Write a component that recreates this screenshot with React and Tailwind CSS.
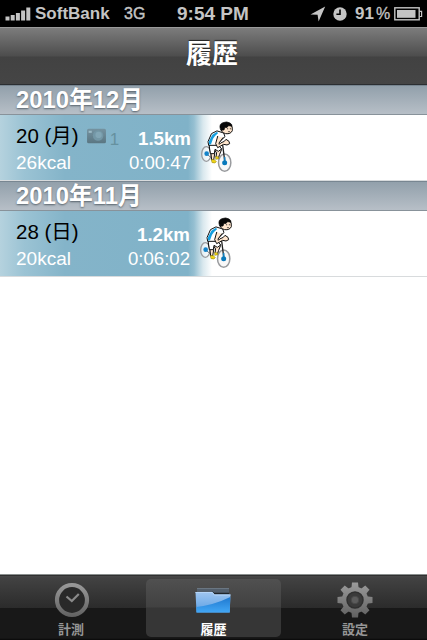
const months = [
  {
    title: "2010年12月",
    rides: [{ day: "20 (月)", photos: 1, distance: "1.5km", calories: "26kcal", time: "0:00:47" }],
  },
  {
    title: "2010年11月",
    rides: [{ day: "28 (日)", photos: 0, distance: "1.2km", calories: "20kcal", time: "0:06:02" }],
  },
];

function StatusBar() {
  return (
    <div className="flex h-[27px] shrink-0 items-center bg-black text-[#c4c4c4]">
      <svg className="ml-[5px]" width="27" height="14" viewBox="0 0 27 14" fill="#c4c4c4">
        <rect x="0.5" y="9.5" width="4" height="4" />
        <rect x="5.7" y="8" width="4" height="5.5" />
        <rect x="10.9" y="6" width="4" height="7.5" />
        <rect x="16.1" y="3.5" width="4" height="10" />
        <rect x="21.3" y="0.5" width="4" height="13" />
      </svg>
      <span className="ml-[3px] w-[76px] text-[17px] leading-[27px] font-bold">SoftBank</span>
      <span className="ml-[13px] w-[53px] text-[16px] leading-[27px] [-webkit-text-stroke:0.4px]">3G</span>
      <span className="w-[72px] text-[19px] leading-[27px] font-bold">9:54 PM</span>
      <svg className="ml-[61px] shrink-0" width="16" height="16" viewBox="0 0 16 16" fill="#c4c4c4">
        <path d="M15.2 0.5 8.6 15.5 7.6 8.7 0.5 8.4Z" />
      </svg>
      <svg className="ml-[7px] shrink-0" width="14" height="14" viewBox="0 0 14 14">
        <circle cx="7" cy="7" r="6.7" fill="#c4c4c4" />
        <path d="M7 2.5V7.3H3.4" fill="none" stroke="#000" strokeWidth="1.6" />
      </svg>
      <span className="ml-[8px] w-[19px] text-[17px] leading-[27px] font-bold">91</span>
      <span className="ml-[2px] w-[14px] text-[16px] leading-[27px] [-webkit-text-stroke:0.3px]">%</span>
      <svg className="ml-[4px] shrink-0" width="29" height="14" viewBox="0 0 29 14" fill="none">
        <rect x="0.8" y="0.8" width="24.4" height="12" stroke="#c4c4c4" strokeWidth="1.4" />
        <rect x="3" y="3" width="18.5" height="7.8" fill="#c4c4c4" />
        <path d="M25.5 4.3H27.6V9.5H25.5" stroke="#c4c4c4" strokeWidth="1.2" />
      </svg>
    </div>
  );
}

function Camera() {
  return (
    <svg className="mt-[12px] ml-[7px] shrink-0" width="21" height="18" viewBox="0 0 20 17">
      <defs>
        <linearGradient id="camera" x1="0" y1="0" x2="0" y2="1">
          <stop offset="0" stopColor="#7593a1" />
          <stop offset="1" stopColor="#5a7682" />
        </linearGradient>
      </defs>
      <path d="M1 3Q1 1.5 2.5 1.5H17.5Q19 1.5 19 3V14Q19 15.5 17.5 15.5H2.5Q1 15.5 1 14Z" fill="url(#camera)" />
      <circle cx="11.5" cy="8" r="5" fill="#7397a6" />
      <circle cx="12" cy="7.5" r="3" fill="#82a6b5" />
      <rect x="2.5" y="3.5" width="3" height="2" fill="#9cbac6" />
    </svg>
  );
}

function Cyclist() {
  return (
    <svg className="mt-[5px] shrink-0" width="35" height="56" viewBox="30 30 105 168" strokeLinecap="round" strokeLinejoin="round">
      <ellipse cx="49" cy="132" rx="14" ry="22" fill="#fff" fillOpacity="0.35" stroke="#999b9e" strokeWidth="4" />
      <ellipse cx="104" cy="158" rx="18.5" ry="26" fill="#f8f8f8" stroke="#999b9e" strokeWidth="4.5" />
      <path d="M48 131 68 146M82 116 92 128" fill="none" stroke="#777b80" strokeWidth="3" />
      <path d="M98 105 104 152" stroke="#222" strokeWidth="4" />
      <path d="M75 109 95 118 89 133 85 144 78 142 80 127 70 119Z" fill="#ffe5cc" stroke="#111" strokeWidth="3" />
      <path d="M59 112 76 112 74 132 71 150 65 150 63 132Z" fill="#ffe5cc" stroke="#111" strokeWidth="3" />
      <path d="M58 101 82 101 95 117 85 124 75 118 73 131 62 131Z" fill="#fff" stroke="#111" strokeWidth="3" />
      <path d="M82 63 101 69 105 80 91 93 79 106 56 106 54 95 64 72Z" fill="#fff" stroke="#111" strokeWidth="3" />
      <path d="M81 65 67 74 56 95 58 104 63 103 69 86 75 78 84 70Z" fill="#159fdf" />
      <path d="M83 79 77 101 83 113 92 108 101 103 111 105 119 101 117 94 108 88 103 94 92 99 88 103 87 99 99 83" fill="#ffe5cc" stroke="#111" strokeWidth="3" />
      <path d="M93 60Q96 70 107 71Q122 73 127 62Q129 50 121 42L98 46Z" fill="#ffe5cc" stroke="#111" strokeWidth="3" />
      <path d="M90 53Q88 41 99 38Q110 33 120 39Q127 43 126 49L116 47 110 53 105 52 102 60 94 61Z" fill="#080808" stroke="#080808" strokeWidth="2" />
      <path d="M113 55V57M121 55V57M115 65H119" stroke="#222" strokeWidth="2.2" />
      <circle cx="50" cy="131" r="7" fill="#1483c9" />
      <path d="M104 143V151" stroke="#1681be" strokeWidth="5" />
      <circle cx="104" cy="158" r="7.5" fill="#0879bb" />
      <path d="M65 149H73L79 155Q76 161 67 158Z" fill="#f3d713" stroke="#a08e14" strokeWidth="2" />
      <path d="M77 139 86 141 87 146 78 148Z" fill="#f3d713" stroke="#7f7214" strokeWidth="1.5" />
    </svg>
  );
}

function RideRow({ ride }) {
  // rows with photos sit a pixel further right
  return (
    <div className="flex h-[66px] border-b border-[#d8dbdd] bg-[linear-gradient(90deg,#b5d2de_0px,#9bc3d4_24px,#84b4c9_65px,#80b2c8_188px,#95bfd1_194px,#d9e8ee_203px,#fff_212px)]">
      <div className={`flex shrink-0 flex-col pl-4 ${ride.photos > 0 ? "w-[191px]" : "w-[190px]"}`}>
        <div className="flex h-[40px]">
          <span className="pt-[8px] text-[20.5px] leading-[26px] whitespace-nowrap text-black">{ride.day}</span>
          {ride.photos > 0 && (
            <>
              <Camera />
              <span className="mt-[14px] ml-[3px] text-[17px] leading-[22px] text-[#66919f]">{ride.photos}</span>
            </>
          )}
          <span className="mt-[13px] ml-auto text-[18.7px] leading-[22px] font-bold text-white">{ride.distance}</span>
        </div>
        <div className="-mt-[3px] flex justify-between text-[18.6px] leading-[22px] text-white">
          <span className="text-[19px]">{ride.calories}</span>
          <span>{ride.time}</span>
        </div>
      </div>
      <div className="ml-[9px] flex">
        <Cyclist />
      </div>
    </div>
  );
}

function ClockIcon() {
  return (
    <svg width="36" height="36" viewBox="0 0 36 36">
      <defs>
        <linearGradient id="metal" x1="0" y1="0" x2="0" y2="36" gradientUnits="userSpaceOnUse">
          <stop offset="0" stopColor="#9c9c9c" />
          <stop offset="1" stopColor="#606060" />
        </linearGradient>
      </defs>
      <circle cx="18" cy="18" r="15" fill="#292929" stroke="url(#metal)" strokeWidth="4.2" />
      <path d="m12.5 14.5 5.3 4.5 7-7" fill="none" stroke="#8a8a8a" strokeWidth="2.2" />
    </svg>
  );
}

function FolderIcon() {
  return (
    <svg className="mr-[1px] shrink-0" width="36" height="36" viewBox="0 0 36 36">
      <defs>
        <linearGradient id="folder" x1="0" y1="0" x2="0" y2="1">
          <stop offset="0" stopColor="#a0c6f0" />
          <stop offset="1" stopColor="#5a9fe4" />
        </linearGradient>
        <linearGradient id="folder-low" x1="0" y1="0" x2="0" y2="1">
          <stop offset="0" stopColor="#1f78cf" />
          <stop offset="1" stopColor="#42a7f5" />
        </linearGradient>
      </defs>
      <path d="M2 4H34V14H2Z" fill="#535f6c" />
      <path d="M2 4.5H34" fill="none" stroke="#6a7682" />
      <path d="M17 8 19 9.5H34" fill="none" stroke="#20262c" strokeWidth="1.5" />
      <path d="M0.5 8H17.5L19.5 10.5H35.5L34.7 28.5H1.5Z" fill="url(#folder)" />
      <path d="M1.3 23Q19 21 35.3 13L34.7 28.5H1.5Z" fill="url(#folder-low)" />
      <path d="M0.5 8.5H17.3L19.3 11H35.5" fill="none" stroke="#b5d5f8" />
    </svg>
  );
}

function GearIcon() {
  const angles = [0, 45, 90, 135, 180, 225, 270, 315];
  return (
    <svg width="36" height="36" viewBox="0 0 36 36">
      <defs>
        <mask id="gear">
          <circle cx="18" cy="18" r="13.2" fill="#fff" />
          {angles.map((a) => (
            <path key={a} d="M14.3 7 15 0.5H21L21.7 7Z" fill="#fff" transform={`rotate(${a} 18 18)`} />
          ))}
        </mask>
      </defs>
      <rect width="36" height="36" fill="url(#metal)" mask="url(#gear)" />
      <circle cx="18" cy="18" r="8" fill="#3a3a3a" stroke="#303030" strokeWidth="1.5" />
      <circle cx="18" cy="18" r="3.8" fill="#5c5c5c" stroke="#494949" />
    </svg>
  );
}

function TabBar() {
  return (
    <nav className="grid h-[66px] shrink-0 grid-cols-[2px_139px_5px_135px_4px_139px] grid-rows-[65px] border-t border-[#8a8f8e] bg-[linear-gradient(#303030_0px,#303030_1px,#484848_1px,#424242_3px,#2b2b2b_33px,#181818_33px,#181818_63px,#080808_65px)]">
      <div className="col-start-2 flex flex-col items-center pt-[7px] text-[#969696]">
        <ClockIcon />
        <span className="mt-[2px] mr-[1px] text-[13px] leading-5 font-bold">計測</span>
      </div>
      <div className="col-start-4 mt-[4px] mb-[3px] flex flex-col items-center rounded-[5px] bg-[linear-gradient(#505050_0px,#414141_28px,#363636_29px,#363636_58px)] pt-[5px] text-white">
        <FolderIcon />
        <span className="mt-[3px] shrink-0 text-[13px] leading-[14px] font-bold">履歴</span>
      </div>
      <div className="col-start-6 flex flex-col items-center pt-[7px] text-[#969696]">
        <GearIcon />
        <span className="mt-[2px] ml-[1px] text-[13px] leading-5 font-bold">設定</span>
      </div>
    </nav>
  );
}

export default function App() {
  return (
    <div className="flex h-[640px] w-[427px] flex-col overflow-hidden bg-white font-['Liberation_Sans','Noto_Sans_CJK_JP',sans-serif]">
      <StatusBar />
      <header className="flex h-[58px] shrink-0 items-center justify-center border-t border-b border-t-[#9a9a9a] border-b-[#2b2e31] bg-[linear-gradient(#7c7c7c_0px,#4d4d4d_28px,#424242_29px,#454545_56px)] pr-[3px] pb-[4px]">
        <h1 className="text-[26px] leading-[40px] font-bold text-white [text-shadow:0_-1px_1px_#222]">履歴</h1>
      </header>
      <main className="flex-1">
        {months.map((month) => (
          <section key={month.title}>
            <h2 className="h-[30px] border-t border-b border-t-[#788691] border-b-[#88929a] bg-linear-to-b from-[#92a0ab] to-[#b7bfc7] pl-4 text-[23.8px] leading-[28px] font-bold text-white [text-shadow:0_1px_2px_#58636c]">{month.title}</h2>
            {month.rides.map((ride) => (
              <RideRow key={ride.day} ride={ride} />
            ))}
          </section>
        ))}
      </main>
      <TabBar />
    </div>
  );
}
